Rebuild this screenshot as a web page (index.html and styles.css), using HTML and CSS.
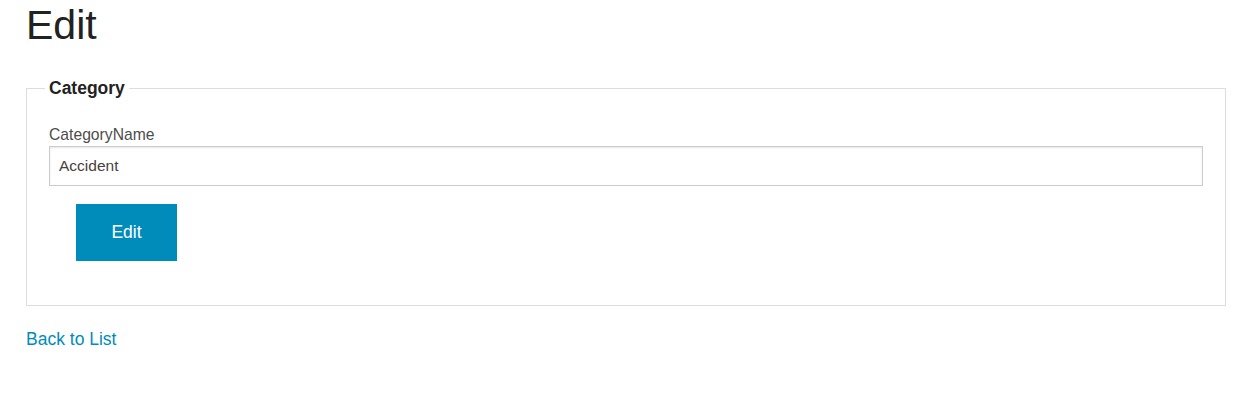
FILE: index.html
```html
<!DOCTYPE html>
<html>
<head>
<meta charset="utf-8">
<link rel="stylesheet" href="styles.css">
</head>
<body>
<div class="page">
  <h1 class="title">Edit</h1>
  <form class="form">
    <fieldset class="box">
      <legend class="legend">Category</legend>
      <label class="label" for="name">CategoryName</label>
      <input class="input" id="name" type="text" value="Accident">
      <div class="actions">
        <button class="btn" type="button">Edit</button>
      </div>
    </fieldset>
  </form>
  <a class="back" href="#">Back to List</a>
</div>
</body>
</html>
```

FILE: styles.css
```css
html, body {
  margin: 0;
  padding: 0;
  background: #fff;
}
body {
  font-family: "Liberation Sans", Arial, sans-serif;
  color: #222;
}
.page {
  width: 1200px;
  margin-left: 26px;
}
.title {
  margin: 0;
  padding-top: 1px;
  font-size: 41px;
  font-weight: 400;
  line-height: 48px;
  color: #222;
}
.form {
  margin-top: 29px;
}
.box {
  margin: 0;
  border: 1px solid #ddd;
  padding: 27px 22px 44px 22px;
}
.legend {
  padding: 0 4px;
  margin-left: -4px;
  font-size: 17.5px;
  font-weight: 700;
  color: #222;
}
.label {
  display: block;
  font-size: 15.7px;
  line-height: 18px;
  color: #4d4d4d;
  margin-bottom: 2px;
}
.input {
  display: block;
  box-sizing: border-box;
  width: 100%;
  height: 40px;
  margin: 0;
  padding: 0 9px;
  border: 1px solid #ccc;
  box-shadow: inset 0 1px 2px rgba(0,0,0,0.1);
  font-family: "Liberation Sans", Arial, sans-serif;
  font-size: 15.5px;
  color: #4a4040;
  background: #fff;
  outline: none;
}
.actions {
  padding-left: 27px;
  margin-top: 18px;
}
.btn {
  width: 101px;
  height: 57px;
  border: 0;
  background: #008cba;
  color: #fff;
  font-family: "Liberation Sans", Arial, sans-serif;
  font-size: 17.5px;
  padding: 0;
  cursor: pointer;
}
.back {
  display: inline-block;
  margin-top: 23px;
  font-size: 17.5px;
  line-height: 20px;
  color: #008cba;
  text-decoration: none;
}
```
